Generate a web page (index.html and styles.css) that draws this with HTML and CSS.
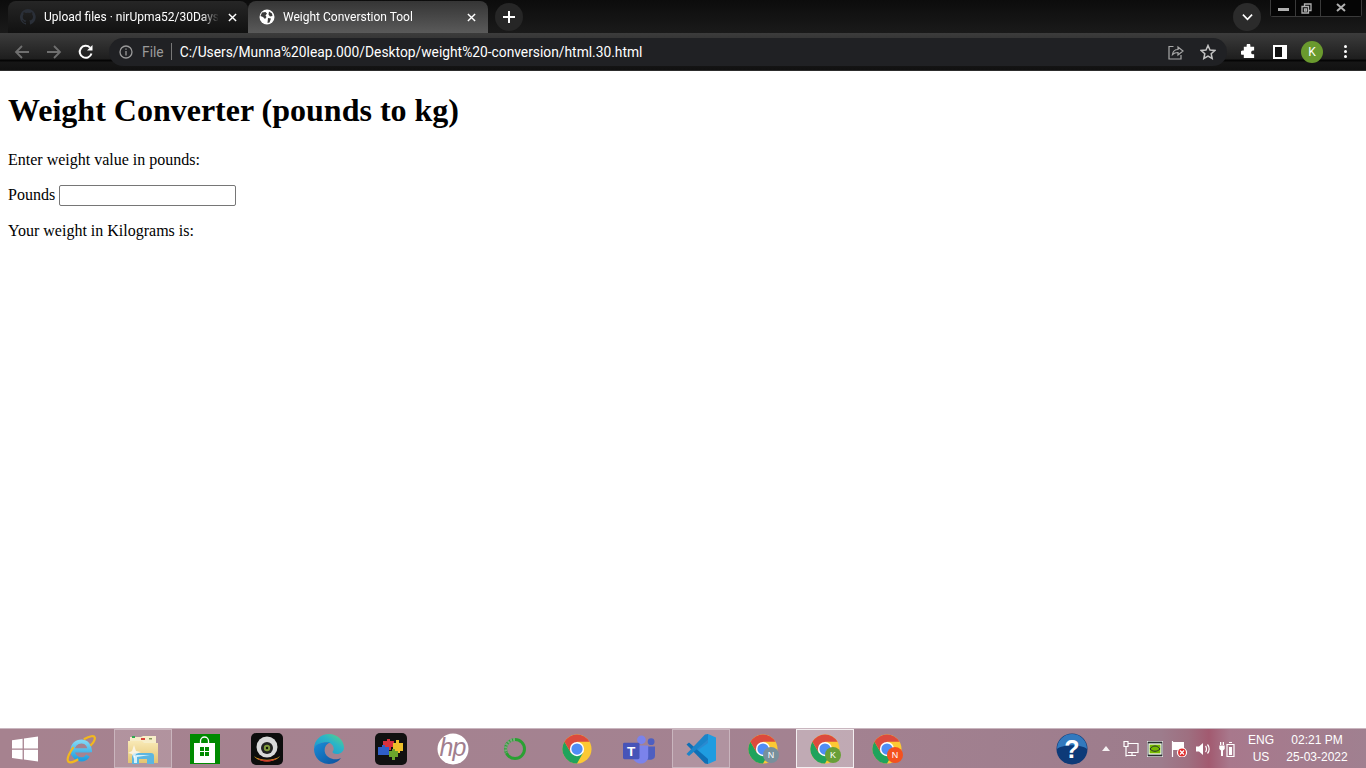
FILE: index.html
```html
<!DOCTYPE html>
<html lang="en">
  <head>
    <meta charset="UTF-8" />
    <title>Weight Conversion Tool</title>
    <link rel="stylesheet" href="styles.css">
  </head>
  <body>
    <svg class="defs" width="0" height="0">
      <defs>
        <linearGradient id="edgeTop" x1="0" y1="1" x2="1" y2="0">
          <stop offset="0" stop-color="#1b8fd0" />
          <stop offset="0.6" stop-color="#2bb5c8" />
          <stop offset="1" stop-color="#5fd67a" />
        </linearGradient>
        <linearGradient id="edgeLow" x1="0" y1="0" x2="1" y2="1">
          <stop offset="0" stop-color="#1a8ed8" />
          <stop offset="1" stop-color="#0c4f9c" />
        </linearGradient>
        <linearGradient id="folder" x1="0" y1="0" x2="0" y2="1">
          <stop offset="0" stop-color="#f8e9b6" />
          <stop offset="1" stop-color="#e4c470" />
        </linearGradient>
        <linearGradient id="ieBlue" x1="0" y1="0" x2="0" y2="1">
          <stop offset="0" stop-color="#7fd6f5" />
          <stop offset="1" stop-color="#1f9fe0" />
        </linearGradient>
      </defs>
      <symbol id="chrome" viewBox="0 0 32 32">
        <circle cx="16" cy="16" r="15.5" fill="#fcc934" />
        <path d="M2.6 8.200A15.500 15.500 0 0 0 16 31.500L22.500 20H9.500z" fill="#1fa35c" />
        <path d="M2.600 8.200A15.500 15.500 0 0 1 29.400 8.200H16L9.500 20z" fill="#dc4a3d" />
        <circle cx="16" cy="16" r="7.600" fill="#fff" />
        <circle cx="16" cy="16" r="6" fill="#4f8df5" />
      </symbol>
    </svg>

    <header class="browser">
      <div class="tabstrip">
        <div class="tab">
          <svg class="favicon" viewBox="0 0 16 16"><path fill="#2a2f38" d="M8 0a8 8 0 0 0-2.500 15.600c.4 0 .5-.2.5-.4v-1.400c-2.200.5-2.700-1-2.700-1-.4-.9-.9-1.200-.9-1.200-.7-.5 0-.5 0-.5.8.1 1.200.8 1.200.8.7 1.200 1.900.9 2.300.7.100-.5.300-.9.500-1.100-1.800-.2-3.600-.9-3.600-4 0-.9.300-1.600.8-2.100-.1-.2-.4-1 .1-2.100 0 0 .7-.2 2.200.8a7.600 7.600 0 0 1 4 0c1.500-1 2.200-.8 2.200-.8.400 1.100.200 1.900.100 2.100.5.600.8 1.300.8 2.100 0 3.100-1.900 3.700-3.700 3.900.3.300.6.800.6 1.500v2.200c0 .2.100.5.600.4A8 8 0 0 0 8 0z" /></svg>
          <span class="tab-title">Upload files · nirUpma52/30Days</span>
          <svg class="tab-close" viewBox="0 0 10 10"><path d="M1 1l8 8M9 1l-8 8" /></svg>
        </div>
        <div class="tab tab-active">
          <svg class="favicon" viewBox="0 0 16 16"><circle cx="8" cy="8" r="7.500" fill="#fff" /><path fill="#3b3b3b" d="M3 3.500 6.500 3 8 4.500 6.500 6.500 7.500 8 6 10 4 8 1.500 7zM10 2.500l3 2 .5 2.500-2.500.5-1.500-2zM9 9l3 .5-1.500 4-2 .5z" /></svg>
          <span class="tab-title">Weight Converstion Tool</span>
          <svg class="tab-close" viewBox="0 0 10 10"><path d="M1 1l8 8M9 1l-8 8" /></svg>
        </div>
        <div class="new-tab">
          <svg viewBox="0 0 12 12"><path d="M6 0v12M0 6h12" /></svg>
        </div>
        <div class="strip-end">
          <div class="tab-search">
            <svg viewBox="0 0 12 8"><path d="M1 1.500 6 6.500 11 1.500" /></svg>
          </div>
          <div class="win-controls">
            <div class="win-btn win-min"><span></span></div>
            <div class="win-btn win-max">
              <svg viewBox="0 0 11 11"><path d="M3.500 3V1h6.500v6.500H8M1 3.500h6.500V10H1zM3.500 6h2v2h-2z" /></svg>
            </div>
            <div class="win-btn win-close">
              <svg viewBox="0 0 10 10"><path d="M1 1l8 7M9 1L1 8" /></svg>
            </div>
          </div>
        </div>
      </div>

      <div class="toolbar">
        <svg class="nav-icon nav-off" viewBox="0 0 16 16"><path d="M15 8H2M8 2 2 8l6 6" /></svg>
        <svg class="nav-icon nav-off" viewBox="0 0 16 16"><path d="M1 8h13M8 2l6 6-6 6" /></svg>
        <svg class="nav-icon nav-reload" viewBox="0 0 16 16"><path d="M13.500 9.500A6 6 0 1 1 12 3.600" /><path class="fill" d="M14.500 1v5.500H9z" /></svg>
        <div class="omnibox">
          <svg class="info" viewBox="0 0 14 14"><circle cx="7" cy="7" r="6" /><path d="M7 6v4.500M7 3.500v1.300" /></svg>
          <span class="scheme">File</span>
          <span class="sep"></span>
          <span class="url">C:/Users/Munna%20leap.000/Desktop/weight%20-conversion/html.30.html</span>
          <svg class="omni-icon share" viewBox="0 0 16 16"><path d="M5.500 2.500H1v12.500h12v-4" /><path d="M4.500 10.500C5 7 7.500 5.500 10 5.500V3l5 4-5 4V8.500c-2 0-4 .5-5.500 2z" /></svg>
          <svg class="omni-icon star" viewBox="0 0 16 16"><path d="M8 1.500l2 4.500 4.800.5-3.600 3.200 1 4.800L8 12.100l-4.200 2.400 1-4.800L1.200 6.500 6 6z" /></svg>
        </div>
        <div class="tool-actions">
          <svg class="puzzle" viewBox="0 0 16 16"><path d="M6 1.500a2 2 0 0 1 4 0V3h4v4h-1.200a2 2 0 0 0 0 4H14v4H3v-3.500H1.800a2.200 2.200 0 0 1 0-4.500H3V3h3z" /></svg>
          <span class="side-panel"></span>
          <span class="avatar">K</span>
          <span class="kebab"><i></i><i></i><i></i></span>
        </div>
      </div>
    </header>

    <main class="page">
      <h1>Weight Converter (pounds to kg)</h1>
      <p>Enter weight value in pounds:</p>
      <p>
        <label for="pounds">Pounds</label>
        <input id="pounds" type="text" />
      </p>
      <p>Your weight in Kilograms is: <span id="output"></span></p>
    </main>

    <footer class="taskbar">
      <div class="task start">
        <svg viewBox="0 0 26 26"><path fill="#fff" d="M0 4.200 10.600 2.700V12.400H0zM11.900 2.500 26 .4V12.400H11.900zM0 13.700H10.600V23.400L0 21.900zM11.900 13.700H26V25.600L11.900 23.600z" /></svg>
      </div>
      <div class="task">
        <svg viewBox="0 0 32 32" class="icon-30">
          <path d="M8 17.500H25.500M23.500 23C21.500 26 19 27 16.500 27 11 27 7 22.500 7 17.500 7 12 11 8 16.500 8 22 8 25.500 12.500 25.500 19.500" fill="none" stroke="url(#ieBlue)" stroke-width="4.500" />
          <path d="M19 5.500C25.500 2 30 1.300 30.700 3.800 31.200 6.200 28.500 10 26 12.500M8 14C3 21 .5 27 2.500 29.500 4.500 31.500 9 29.500 13 27" fill="none" stroke="#f2b81f" stroke-width="2.400" />
        </svg>
      </div>
      <div class="task task-open">
        <svg viewBox="0 0 32 32">
          <path d="M3 4h11l2-1h13v9H3z" fill="#f7eec9" />
          <path d="M5 3h3v2H5z" fill="#2fa84f" /><path d="M14 5h4v2h-4z" fill="#d8453a" /><path d="M22 5h3v1.500h-3z" fill="#8a9a5a" />
          <path d="M1 8h14l2 2h14v20H1z" fill="url(#folder)" />
          <path d="M5 31v-7a4 4 0 0 1 4-4h15a3 3 0 0 1 3 3v8h-7v-5h-8v5z" fill="#5cb6e0" />
          <path d="M7 30v-7l3-1h13l-13 2v6z" fill="#d6f1fb" />
          <path d="M5 18l2-6 2 6 5 1-5 2-2 5-2-5-4-1z" fill="#fff" opacity=".7" />
        </svg>
      </div>
      <div class="task">
        <svg viewBox="0 0 30 30" class="icon-30">
          <path d="M0 0h30v30H0z" fill="#008a00" />
          <path d="M4 9h21v20H4z" fill="#fff" />
          <path d="M10.500 9V7a4 4 0 0 1 8 0v2" fill="none" stroke="#fff" stroke-width="1.300" />
          <path d="M10 13h4v4h-4zM15 13h4v4h-4zM10 18h4v4h-4zM15 18h4v4h-4z" fill="#008a00" />
        </svg>
      </div>
      <div class="task">
        <svg viewBox="0 0 32 32">
          <rect width="32" height="32" rx="5" fill="#0d0d0d" />
          <ellipse cx="16" cy="14" rx="10.500" ry="10.500" fill="#d9d9d9" />
          <circle cx="16" cy="15" r="6" fill="#222" />
          <circle cx="16" cy="15" r="3.200" fill="#7f9a3c" />
          <circle cx="16" cy="15" r="1.200" fill="#10140a" />
          <path d="M3 23c6 5 20 5 26 0-4 7-22 7-26 0z" fill="#d9a521" />
          <path d="M6 25c6 3 14 3 20 0-5 5-15 5-20 0z" fill="#c8352e" />
        </svg>
      </div>
      <div class="task">
        <svg viewBox="0 0 32 32">
          <path d="M1 16C1 7 8 1 16 1c8.500 0 15 6.500 15 13.500 0 4-3.500 6.500-7 6.500-2.500 0-4.500-.7-4.500-2 0-.7 1.200-1.200 1.200-3.200C20.700 12.500 18 9.500 13.500 9.500 7 9.500 2 12 1 16z" fill="url(#edgeTop)" />
          <path d="M1 16c0 8.500 6.500 15 15 15 5 0 9.500-2.500 12-6-3 1.500-8 2-12-.5-3.500-2.200-5-5.500-4.200-9 .8-3.500 3.700-6 6-6C10 8.500 2 10.500 1 16z" fill="url(#edgeLow)" />
        </svg>
      </div>
      <div class="task">
        <svg viewBox="0 0 32 32">
          <rect width="32" height="32" rx="5" fill="#111" />
          <path d="M8 8h4V6h3v2h4v6h-3v3h-5v-3H8z" fill="#d8323f" />
          <path d="M18 10h3V7h3v3h4v8h-3v2h-3v-2h-4z" fill="#eec02a" />
          <path d="M3 14h4v-2h3v2h4v8H3z" fill="#2f5fc8" />
          <path d="M14 18h3v-2h3v2h3v6h-3v3h-3v-3h-3z" fill="#6aa52c" />
        </svg>
      </div>
      <div class="task">
        <svg viewBox="0 0 32 32">
          <circle cx="16" cy="16" r="15.500" fill="#fff" />
          <text x="15.500" y="23" class="hp-mark">hp</text>
        </svg>
      </div>
      <div class="task">
        <svg viewBox="0 0 24 24" class="ring">
          <circle cx="12" cy="12" r="9.500" fill="none" stroke="#2aa033" stroke-width="3" />
          <path d="M12 2.500A9.500 9.500 0 0 0 3.500 16" fill="none" stroke="#79a87c" stroke-width="3" stroke-dasharray="2 1" />
        </svg>
      </div>
      <div class="task">
        <svg viewBox="0 0 32 32" class="icon-30"><use href="#chrome" /></svg>
      </div>
      <div class="task">
        <svg viewBox="0 0 33 31">
          <circle cx="29" cy="8" r="3.500" fill="#4e5fc0" />
          <circle cx="19" cy="6" r="4.500" fill="#7b83eb" />
          <path d="M24 13h9v9.500c0 2.500-2 4-4 4h-5z" fill="#4e5fc0" />
          <path d="M10 12h16v11.500c0 4-3.500 7-7.500 7s-8.500-3-8.500-7z" fill="#7b83eb" />
          <rect y="9" width="17" height="17" rx="1.500" fill="#4754b8" />
          <text x="8.500" y="23" class="teams-t">T</text>
        </svg>
      </div>
      <div class="task task-open">
        <svg viewBox="0 0 32 32">
          <path d="M23 1 31 4.500v23L23 31 9 17.500z" fill="#1f9ce0" />
          <path d="M23 1v9L12.500 17.500 9 14.500z" fill="#2a8ad0" />
          <path d="M1.500 11.500 4 9.500l19 16.500V31l-3-.5z" fill="#0f6fb5" />
          <path d="M1.500 21 4 23l19-16.500V1l-3 .5z" fill="#1b84c9" />
        </svg>
      </div>
      <div class="task">
        <svg viewBox="0 0 32 32" class="icon-30"><use href="#chrome" /></svg>
        <span class="badge badge-n">N</span>
      </div>
      <div class="task task-active">
        <svg viewBox="0 0 32 32" class="icon-30"><use href="#chrome" /></svg>
        <span class="badge badge-k">K</span>
      </div>
      <div class="task">
        <svg viewBox="0 0 32 32" class="icon-30"><use href="#chrome" /></svg>
        <span class="badge badge-o">N</span>
      </div>

      <div class="tray">
        <svg class="help" viewBox="0 0 32 32">
          <circle cx="16" cy="16" r="15.500" fill="#0d3a78" />
          <path d="M1 16a15 15 0 0 1 30 0c-6-5-24-5-30 0z" fill="#3f8fd6" opacity=".75" />
          <text x="16" y="25" class="help-mark">?</text>
        </svg>
        <svg class="tray-arrow" viewBox="0 0 8 5"><path d="M4 0l4 5H0z" /></svg>
        <svg class="tray-icon" viewBox="0 0 16 16"><path d="M5 2.500h10v9H5M1 .5h4v5H1zM3 5.500v10M3 14.500h10M9 11.500v3" /></svg>
        <svg class="tray-icon" viewBox="0 0 16 16">
          <rect width="16" height="16" fill="#2a3030" />
          <rect x="2" y="3" width="12" height="10" fill="#76b900" />
          <path d="M3 8c3-4 7-4 10 0-3 3-7 3-10 0z" fill="none" stroke="#2a3030" stroke-width="1" />
        </svg>
        <svg class="tray-icon" viewBox="0 0 16 16">
          <path d="M1.500 0v16" />
          <path class="white" d="M2 1h11v8H2z" />
          <circle cx="11" cy="11.500" r="4.500" fill="#e02b2b" />
          <path d="M9 9.500l4 4M13 9.500l-4 4" />
        </svg>
        <svg class="tray-icon" viewBox="0 0 16 16">
          <path class="white" d="M1 5.500h3L8 2v12l-4-3.500H1z" />
          <path d="M10.500 5c1.300 1.500 1.300 4.500 0 6M12.500 3.500c2.200 2.500 2.200 6.500 0 9" />
        </svg>
        <svg class="tray-icon" viewBox="0 0 16 16">
          <path class="white" d="M1 1h1.300v3H1zM3.700 1H5v3H3.700zM.3 4.500h5.400V8L4 9.500V15H2V9.500L.3 8z" />
          <path d="M8 3.500h7v12H8zM10 1.500h3" />
          <path class="white" d="M10 6h3v8h-3z" />
        </svg>
        <div class="lang"><span>ENG</span><span>US</span></div>
        <div class="clock"><span>02:21 PM</span><span>25-03-2022</span></div>
      </div>
    </footer>
  </body>
</html>
```

FILE: styles.css
```css
* {
  box-sizing: border-box;
}
html,
body {
  height: 100%;
}
body {
  display: flex;
  flex-direction: column;
  margin: 0;
  overflow: hidden;
  background-color: #ffffff;
  font-family: "Liberation Serif", "Times New Roman", serif;
}
.defs {
  position: absolute;
}

/* browser chrome */
.browser {
  flex: none;
  height: 71px;
  font-family: "Roboto", "Noto Sans", sans-serif;
  color: #ffffff;
  background-color: #131313;
  border-bottom: 1px solid #2d2d2d;
}
.tabstrip {
  display: flex;
  align-items: flex-end;
  height: 33px;
  padding-left: 8px;
  background: linear-gradient(#0c0c0c, #1a1a1a);
}
.tab {
  display: flex;
  align-items: center;
  width: 240px;
  height: 32px;
  padding: 0 11px 0 12px;
  font-size: 12px;
  background: linear-gradient(#262626, #111111);
  border-radius: 8px 8px 0 0;
}
.tab-active {
  padding: 0 12px 0 11px;
  background: linear-gradient(#353535, #5a5a5a);
}
.favicon {
  flex: none;
  width: 16px;
  height: 16px;
  margin-right: 8px;
}
.tab-title {
  flex: 1;
  overflow: hidden;
  white-space: nowrap;
  -webkit-mask-image: linear-gradient(90deg, #000 90%, transparent);
  mask-image: linear-gradient(90deg, #000 90%, transparent);
}
.tab-close {
  flex: none;
  width: 9px;
  height: 9px;
  margin-left: 9px;
  fill: none;
  stroke: #ffffff;
  stroke-width: 1.6;
}
.new-tab {
  display: flex;
  align-items: center;
  justify-content: center;
  width: 28px;
  height: 28px;
  margin: 0 0 2px 7px;
  border-radius: 50%;
  background-color: #262626;
}
.new-tab svg {
  width: 12px;
  height: 12px;
  fill: none;
  stroke: #ffffff;
  stroke-width: 2;
}
.strip-end {
  display: flex;
  flex: 1;
  align-self: stretch;
  justify-content: flex-end;
}
.tab-search {
  display: flex;
  align-items: center;
  justify-content: center;
  width: 28px;
  height: 28px;
  margin: 3px 9px 0 0;
  border-radius: 50%;
  background-color: #2b2b2b;
}
.tab-search svg {
  width: 11px;
  height: 8px;
  fill: none;
  stroke: #ffffff;
  stroke-width: 1.8;
}
.win-controls {
  display: flex;
  height: 17px;
  margin-right: 4px;
  border: 1px solid #3a3a3a;
  border-top: none;
  border-radius: 0 0 3px 3px;
}
.win-btn {
  display: flex;
  align-items: center;
  justify-content: center;
  width: 25px;
  background-color: #050505;
  border-right: 1px solid #3a3a3a;
}
.win-btn svg {
  fill: none;
  stroke: #b0b0b0;
  stroke-width: 1.300;
}
.win-min span {
  width: 11px;
  height: 3px;
  margin-top: 3px;
  background-color: #b0b0b0;
}
.win-max svg {
  width: 11px;
  height: 11px;
  margin-right: 3px;
}
.win-close {
  width: 40px;
  border-right: none;
}
.win-close svg {
  width: 10px;
  height: 10px;
  stroke-width: 2;
}
.toolbar {
  display: flex;
  align-items: center;
  height: 37px;
  padding-left: 14px;
  background: linear-gradient(#3c3c3c, #1e1e1e 26px, #050505 27px, #050505 28px, #161616 29px, #111111);
}
.nav-icon {
  flex: none;
  width: 16px;
  height: 16px;
  margin-right: 16px;
  fill: none;
  stroke: #ffffff;
  stroke-width: 1.800;
}
.nav-off {
  stroke: #6f6f6f;
}
.nav-reload {
  margin-right: 15px;
  stroke-width: 2;
}
.nav-reload .fill {
  fill: #ffffff;
  stroke: none;
}
.omnibox {
  display: flex;
  flex: none;
  align-items: center;
  width: 1118px;
  height: 28px;
  padding: 0 10px;
  font-size: 13.8px;
  background-color: #202124;
  border-radius: 14px;
}
.info {
  flex: none;
  width: 14px;
  height: 14px;
  fill: none;
  stroke: #9a9a9a;
  stroke-width: 1.300;
}
.scheme {
  margin-left: 9px;
  color: #9a9a9a;
}
.sep {
  width: 1px;
  height: 17px;
  margin: 0 8px 0 7px;
  background-color: #777777;
}
.url {
  flex: 1;
  white-space: nowrap;
}
.omni-icon {
  flex: none;
  width: 16px;
  height: 16px;
  fill: none;
  stroke: #a8a8a8;
  stroke-width: 1.200;
}
.share {
  margin-right: 16px;
}
.star {
  margin-right: 1px;
  stroke: #c4c4c4;
  stroke-width: 1.500;
}
.tool-actions {
  display: flex;
  align-items: center;
  flex: 1;
  padding-left: 14px;
}
.puzzle {
  flex: none;
  width: 15px;
  height: 15px;
  fill: #ffffff;
}
.side-panel {
  flex: none;
  width: 14px;
  height: 14px;
  margin-left: 17px;
  background-color: #111111;
  border: 2px solid #ffffff;
  border-right-width: 5px;
}
.avatar {
  display: flex;
  flex: none;
  align-items: center;
  justify-content: center;
  width: 22px;
  height: 22px;
  margin-left: 14px;
  font-size: 12px;
  background-color: #6a9a2e;
  border-radius: 50%;
}
.kebab {
  display: flex;
  flex: none;
  flex-direction: column;
  gap: 2px;
  margin-left: 21px;
}
.kebab i {
  width: 3px;
  height: 3px;
  background-color: #ffffff;
  border-radius: 50%;
}

/* page content, browser defaults */
.page {
  flex: 1;
  padding: 0 8px;
  overflow: hidden;
}
.page h1 {
  margin: 21.44px 0 21.5px;
  font-size: 32px;
  color: #000000;
}
.page p {
  margin: 16px 0;
  font-size: 16px;
  color: #000000;
}
.page input {
  width: 177px;
  height: 21px;
  padding: 1px 2px;
  font-size: 13px;
  background-color: #ffffff;
  border: 1px solid #767676;
  border-radius: 2px;
}

/* windows taskbar */
.taskbar {
  display: flex;
  flex: none;
  align-items: stretch;
  gap: 4px;
  height: 40px;
  font-family: "Liberation Sans", Arial, sans-serif;
  color: #ffffff;
  background: linear-gradient(90deg, #a6828f 0, #a38291 60%, #9d7c8c 85%, #9e6f80 87%, #a25a70 88.500%, #a8788c 90%, #a08090 100%);
  border-top: 1px solid #c9b6bf;
}
.task {
  position: relative;
  display: flex;
  flex: none;
  align-items: center;
  justify-content: center;
  width: 58px;
  border: 1px solid transparent;
}
.task svg {
  width: 32px;
  height: 32px;
}
.task .icon-30 {
  width: 30px;
  height: 30px;
}
.start {
  width: 48px;
  padding-left: 2px;
}
.start svg {
  width: 26px;
  height: 26px;
}
.task .ring {
  width: 24px;
  height: 24px;
}
.task-open {
  background-color: rgba(255, 255, 255, 0.14);
  border-color: rgba(255, 255, 255, 0.32);
}
.task-active {
  background-color: rgba(255, 255, 255, 0.32);
  border-color: #f3eef0;
}
.badge {
  position: absolute;
  right: 12px;
  bottom: 4px;
  display: flex;
  align-items: center;
  justify-content: center;
  width: 16px;
  height: 16px;
  font-size: 9px;
  border-radius: 50%;
}
.badge-n {
  background-color: #78909c;
}
.badge-k {
  background-color: #689f38;
}
.badge-o {
  background-color: #f4511e;
}
.hp-mark {
  font-family: "Liberation Sans", Arial, sans-serif;
  font-size: 25px;
  font-style: italic;
  letter-spacing: -1px;
  text-anchor: middle;
  fill: #a27f8f;
}
.teams-t {
  font-family: "Liberation Sans", Arial, sans-serif;
  font-size: 14px;
  font-weight: bold;
  text-anchor: middle;
  fill: #ffffff;
}
.tray {
  display: flex;
  flex: 1;
  align-items: center;
  justify-content: flex-end;
  padding-right: 16px;
}
.help {
  flex: none;
  width: 32px;
  height: 32px;
  margin-right: 14px;
}
.help-mark {
  font-family: "Liberation Sans", Arial, sans-serif;
  font-size: 25px;
  font-weight: bold;
  text-anchor: middle;
  fill: #ffffff;
}
.tray-arrow {
  flex: none;
  width: 8px;
  height: 5px;
  margin-right: 13px;
  fill: #f4f0f2;
}
.tray-icon {
  flex: none;
  width: 16px;
  height: 16px;
  margin-right: 8px;
  fill: none;
  stroke: #ffffff;
  stroke-width: 1.200;
}
.tray-icon .white {
  fill: #ffffff;
  stroke: none;
}
.lang,
.clock {
  display: flex;
  flex: none;
  flex-direction: column;
  align-items: center;
  gap: 3px;
  font-size: 12px;
  line-height: 14px;
  white-space: nowrap;
}
.lang {
  width: 26px;
  margin-left: 5px;
}
.clock {
  width: 66px;
  margin-left: 10px;
}
```
